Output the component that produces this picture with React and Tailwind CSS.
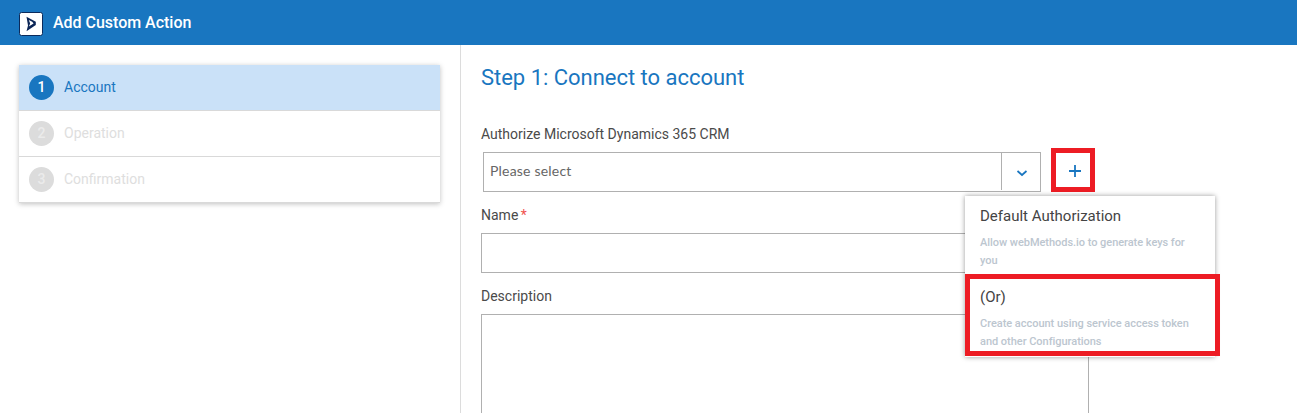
const steps = [
  { n: 1, label: 'Account', active: true },
  { n: 2, label: 'Operation' },
  { n: 3, label: 'Confirmation' },
];

function Logo() {
  return (
    <svg width="24" height="24" viewBox="0 0 24 24">
      <rect x="0.5" y="0.5" width="23" height="23" rx="2" fill="#fff" stroke="#0b2a5b" />
      <path fill="#0b2556" fillRule="evenodd" d="M7.5 4.8L16.8 9.8V13L7.5 19.2L9 13.6ZM9.8 8L11.2 11.6L9.8 14.6L14.6 11.4L13.2 9.8Z" />
    </svg>
  );
}

function Header() {
  return (
    <header className="flex h-[45px] shrink-0 items-center bg-[#1976c0] pl-[19px] text-white">
      <div className="mt-[3px]"><Logo /></div>
      <h1 className="ml-[10px] text-[16px] font-medium leading-5 tracking-[-0.02px]">Add Custom Action</h1>
    </header>
  );
}

function Steps() {
  return (
    <aside className="w-[461px] shrink-0 border-r border-[#dcdcdc] pl-[19px] pr-5 pt-5">
      <ol className="shadow-[0_1px_5px_rgba(0,0,0,0.25)]">
        {steps.map((s) => (
          <li key={s.n} className={`flex h-[46px] items-center border-b border-[#d9d9d9] pl-[10px] text-[14px] ${s.active ? 'bg-[#cae1f8] text-[#1976c0]' : 'bg-white text-[#dedede]'}`}>
            <span className={`flex size-[25px] items-center justify-center rounded-full font-medium ${s.active ? 'bg-[#1976c0] text-white' : 'bg-[#dcdcdc] text-[#ebebeb]'}`}>{s.n}</span>
            <span className="ml-[10px]">{s.label}</span>
          </li>
        ))}
      </ol>
    </aside>
  );
}

function AuthMenu() {
  return (
    <div className="absolute left-[965px] top-[196px] h-[161px] w-[250px] bg-white shadow-[0_0_5px_rgba(0,0,0,0.4)]">
      <div className="h-[78px] px-[15px] pt-[10px]">
        <p className="text-[15px] leading-5 text-[#444]">Default Authorization</p>
        <p className="mt-[8px] text-[11px] font-medium leading-[18px] tracking-[-0.04px] text-[#bcc6cf]">Allow webMethods.io to generate keys for you</p>
      </div>
      <div className="h-[82px] w-[255px] border-5 border-[#ed1c24] px-[10px] pt-[8px]">
        <p className="text-[15px] leading-5 text-[#444]">(Or)</p>
        <p className="mt-[8px] text-[11px] font-medium leading-[18px] tracking-[-0.03px] text-[#bcc6cf]">Create account using service access token and other Configurations</p>
      </div>
    </div>
  );
}

export default function App() {
  return (
    <div className="relative flex h-[413px] w-[1297px] flex-col overflow-hidden bg-white font-['Roboto',sans-serif]">
      <Header />
      <div className="flex min-h-0 flex-1">
        <Steps />
        <main className="flex-1 overflow-hidden pl-5 text-[14px] text-[#4a4a4a]">
          <h2 className="mt-[19px] text-[22px] leading-7 tracking-[-0.02px] text-[#1976c0]">Step 1: Connect to account</h2>
          <p className="mt-[32px] leading-5">Authorize Microsoft Dynamics 365 CRM</p>
          <div className="mt-[4px] flex h-11 pl-[2px]">
            <div className="mt-[4px] flex h-10 w-[558px] border border-[#b0b0b0]">
              <span className="flex flex-1 items-center pb-[4px] pl-[6px] font-['Lato',sans-serif] text-[14px] tracking-[0.2px] text-[#666]">Please select</span>
              <span className="flex h-[37px] w-[39px] items-center justify-center border-l border-[#b0b0b0] pl-px pt-[2px]">
                <svg width="12" height="8" viewBox="0 0 12 8" fill="none" stroke="#1976c0" strokeWidth="1.7"><path d="M1.5 2l4.5 4 4.5-4" /></svg>
              </span>
            </div>
            <button className="ml-[10px] flex size-11 items-center justify-center border-5 border-[#ed1c24] pl-1 pt-[2px]">
              <svg width="14" height="14" viewBox="0 0 14 14" stroke="#1976c0" strokeWidth="1.8"><path d="M1 7h12M7 1v12" /></svg>
            </button>
          </div>
          <p className="mt-[13px] leading-5">Name <span className="-ml-px text-[#f0524f]">*</span></p>
          <div className="mt-[8px] h-10 w-[608px] border border-[#b0b0b0]" />
          <p className="mt-[13px] leading-5">Description</p>
          <div className="mt-[8px] h-[120px] w-[608px] border border-[#b0b0b0]" />
        </main>
      </div>
      <AuthMenu />
    </div>
  );
}
